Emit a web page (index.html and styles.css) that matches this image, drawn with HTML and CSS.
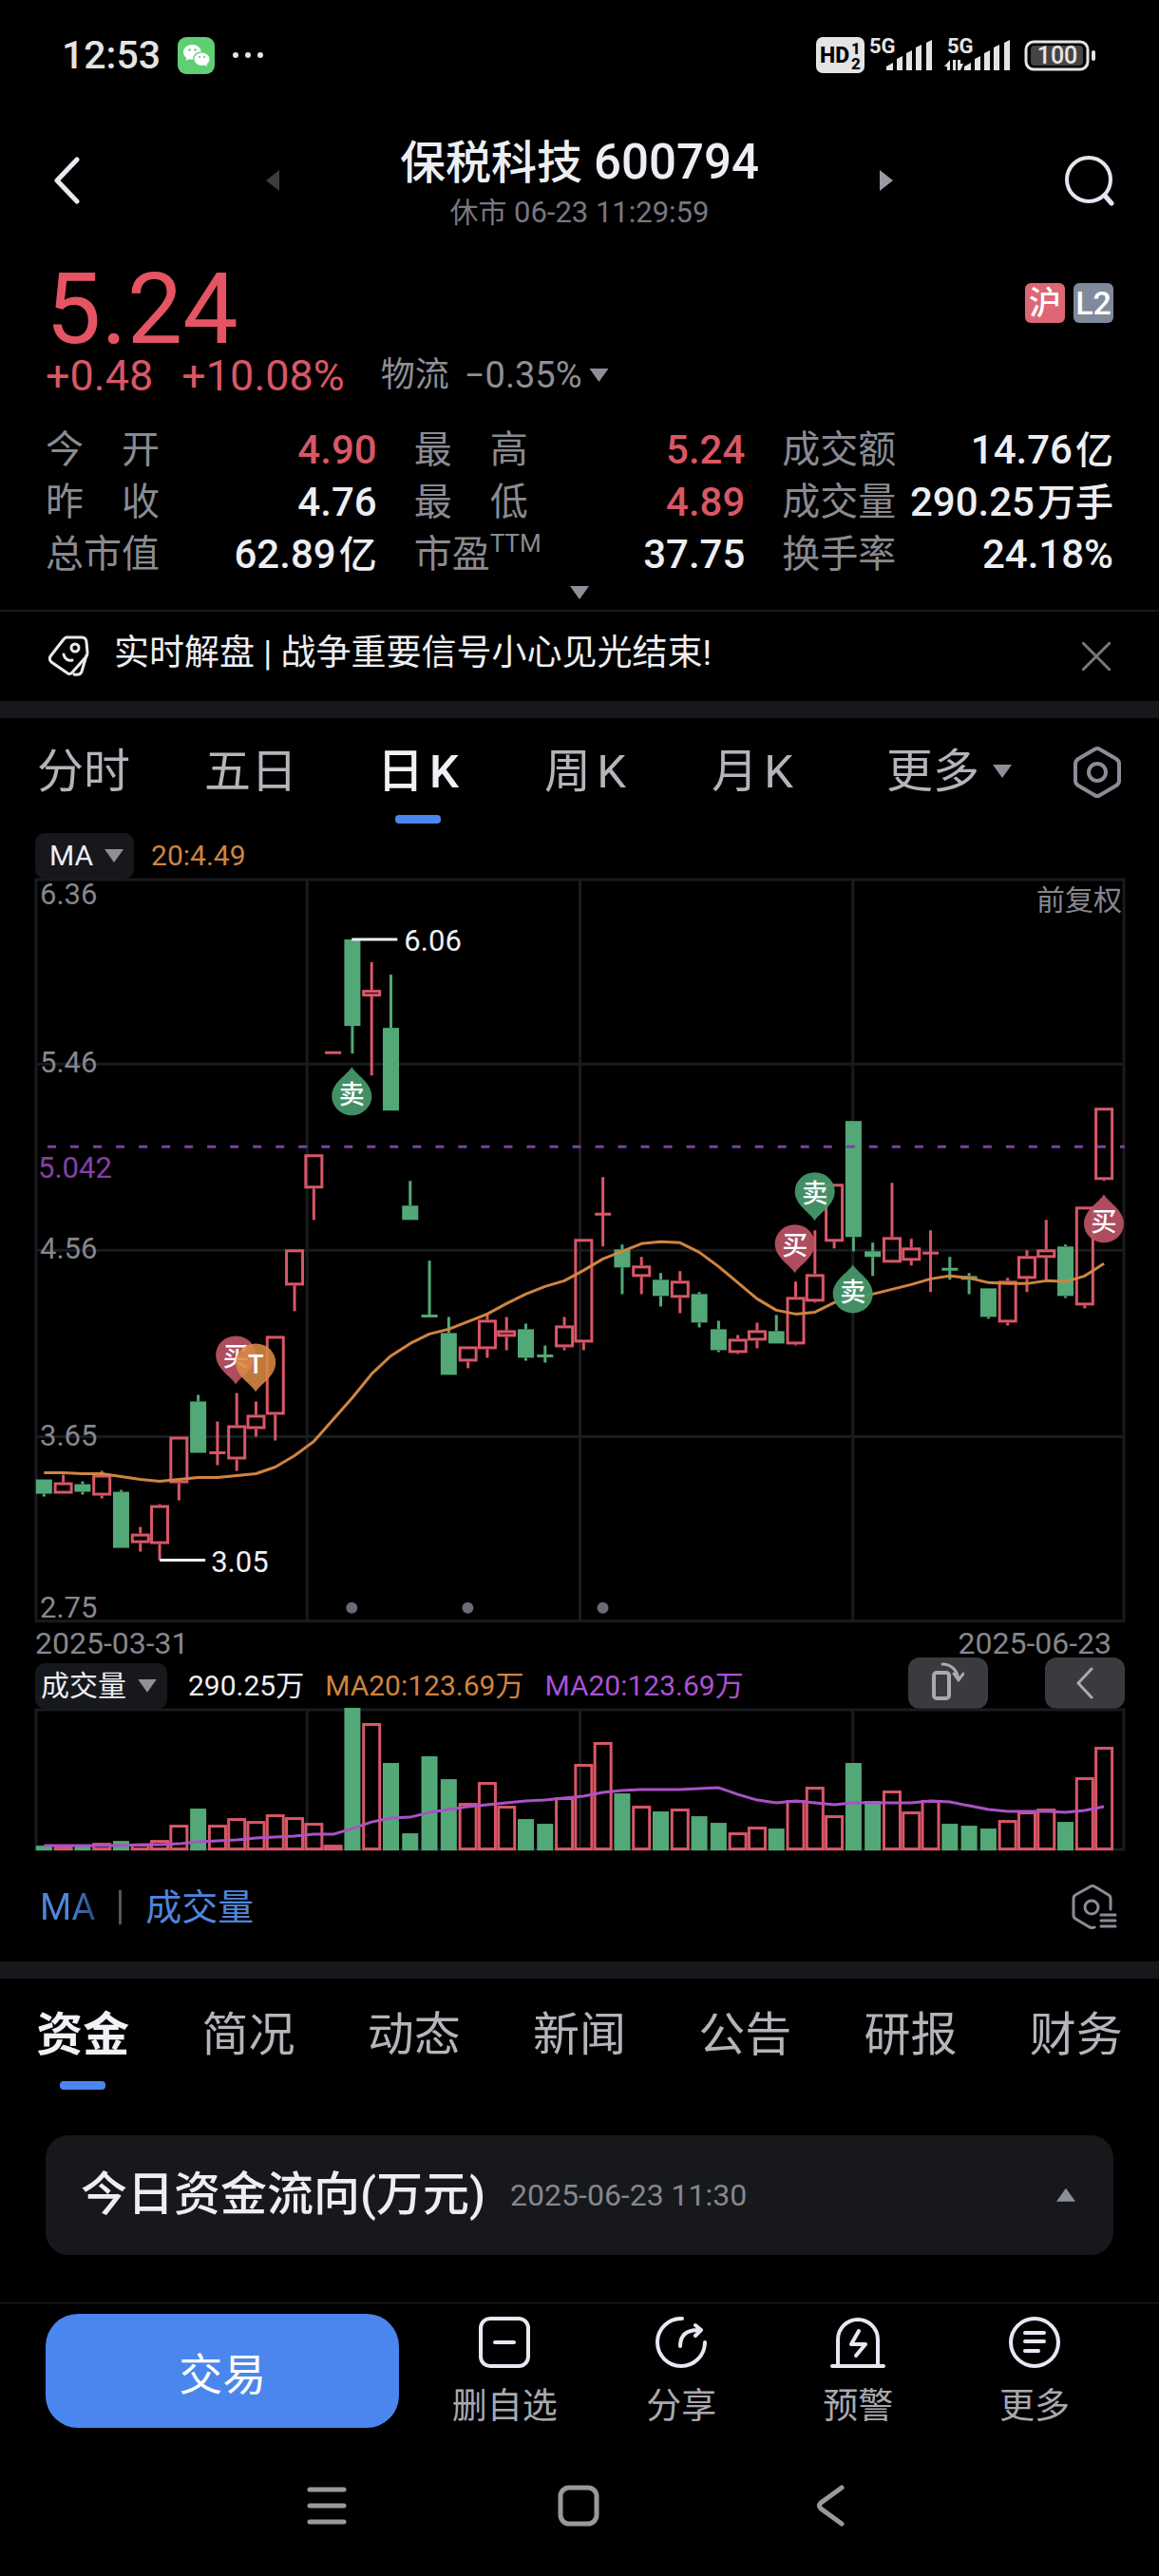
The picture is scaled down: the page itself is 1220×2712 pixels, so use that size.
FILE: index.html
```html
<!DOCTYPE html>
<html lang="zh-CN">
  <head>
    <meta charset="UTF-8" />
    <meta name="viewport" content="width=device-width, initial-scale=1" />
    <title>保税科技 600794</title>
    <link rel="stylesheet" href="styles.css">
  </head>
  <body>
    <div class="status-bar">
      <div class="status-left">
        <span class="clock">12:53</span>
        <svg class="wechat" width="39" height="39" viewBox="0 0 39 39">
          <rect width="39" height="39" rx="9" fill="#5fcf74" />
          <path d="M15.500 8C10.200 8 6 11.600 6 16c0 2.500 1.300 4.600 3.400 6.100l-.9 3 3.400-1.800c1.100.3 2.300.5 3.600.5h.7c-.3-4.600 3.500-8.500 8.700-8.500C24.100 11 20.300 8 15.500 8z" fill="#fff" />
          <path d="M25.500 16.500c-4.400 0-8 3-8 6.700s3.600 6.700 8 6.700c1 0 2-.2 2.900-.5l2.800 1.500-.8-2.500c1.900-1.200 3.100-3.100 3.100-5.200 0-3.700-3.600-6.700-8-6.700z" fill="#fff" />
          <g fill="#5fcf74">
            <circle cx="12.500" cy="13.500" r="1.300" /><circle cx="18.500" cy="13.500" r="1.300" />
            <circle cx="23" cy="21" r="1.100" /><circle cx="28" cy="21" r="1.100" />
          </g>
        </svg>
        <svg width="34" height="8" viewBox="0 0 34 8" fill="#e4e4e4">
          <circle cx="4" cy="4" r="3" /><circle cx="17" cy="4" r="3" /><circle cx="30" cy="4" r="3" />
        </svg>
      </div>
      <div class="status-right">
        <svg width="205" height="50" viewBox="0 -6 205 50" fill="#e4e4e4">
          <rect width="51" height="38" rx="7" />
          <text x="4" y="27" font-size="23" font-weight="800" fill="#000">HD</text>
          <text x="37" y="18" font-size="17" font-weight="800" fill="#000">1</text>
          <text x="37" y="34" font-size="17" font-weight="800" fill="#000">2</text>
          <text x="56" y="17" font-size="22" font-weight="700">5G</text>
          <path d="M74 35v-4l7-4v8zM85 35V23l6-3v15zM95 35V17l6-3v21zM105 35V11l6-3v27zM116 35V6l6-3v32z" />
          <text x="138" y="17" font-size="22" font-weight="700">5G</text>
          <path d="M141 24v11h-3v-4h-3l6-7zM144 24h3v11h-3zM149 35V24h3v4h3l-3 7z" />
          <path d="M156 35v-4l7-4v8zM167 35V23l6-3v15zM177 35V17l6-3v21zM187 35V11l6-3v27zM198 35V6l6-3v32z" />
        </svg>
        <svg width="76" height="33" viewBox="0 0 76 33">
          <rect x="2" y="2" width="65" height="29" rx="8" fill="none" stroke="#e4e4e4" stroke-width="3" />
          <rect x="7" y="6" width="55" height="21" rx="4" fill="#444" />
          <rect x="71" y="11" width="4" height="11" rx="2" fill="#e4e4e4" />
          <text x="35" y="25" font-size="25" font-weight="500" text-anchor="middle" fill="#e4e4e4">100</text>
        </svg>
      </div>
    </div>

    <header class="header">
      <button class="icon-button back" aria-label="返回">
        <svg width="28" height="50" viewBox="0 0 28 50"><path d="M25 3L4 25l21 22" fill="none" stroke="#e9eaf0" stroke-width="5" stroke-linecap="round" stroke-linejoin="round" /></svg>
      </button>
      <div class="stock-switch">
        <button class="caret caret-left" aria-label="上一只"></button>
        <div class="stock-title">
          <h1>保税科技 <span>600794</span></h1>
          <p>休市 <span>06-23 11:29:59</span></p>
        </div>
        <button class="caret caret-right" aria-label="下一只"></button>
      </div>
      <button class="icon-button search" aria-label="搜索">
        <svg width="54" height="54" viewBox="0 0 54 54" fill="none" stroke="#e3e6f0" stroke-linecap="round"><circle cx="26" cy="26" r="23" stroke-width="4" /><path d="M43 43l7 8" stroke-width="5" /></svg>
      </button>
    </header>

    <section class="quote">
      <div class="price-row">
        <strong class="price">5.24</strong>
        <div class="badges"><span class="badge badge-sh">沪</span><span class="badge badge-l2">L2</span></div>
      </div>
      <div class="change-row">
        <span class="up">+0.48</span>
        <span class="up">+10.08%</span>
        <button class="sector">物流 <span>−0.35%</span><i class="caret caret-down"></i></button>
      </div>
      <dl class="stats">
        <div><dt class="spread">今<i></i>开</dt><dd class="up">4.90</dd></div>
        <div><dt class="spread">最<i></i>高</dt><dd class="up">5.24</dd></div>
        <div><dt>成交额</dt><dd>14.76<small>亿</small></dd></div>
        <div><dt class="spread">昨<i></i>收</dt><dd>4.76</dd></div>
        <div><dt class="spread">最<i></i>低</dt><dd class="up">4.89</dd></div>
        <div><dt>成交量</dt><dd>290.25<small>万手</small></dd></div>
        <div><dt>总市值</dt><dd>62.89<small>亿</small></dd></div>
        <div><dt>市盈<sup>TTM</sup></dt><dd>37.75</dd></div>
        <div><dt>换手率</dt><dd>24.18%</dd></div>
      </dl>
      <button class="caret caret-down expand" aria-label="展开"></button>
    </section>

    <section class="notice">
      <svg width="44" height="46" viewBox="0 0 44 46" fill="none" stroke="#e9eaf0" stroke-width="3" stroke-linecap="round" stroke-linejoin="round">
        <path d="M20 3h16c3 0 5 2 5 5l1 11c0 2 0 3-1 4L26 40c-2 2-4 2-6 0L4 29c-2-2-2-4-1-6L17 5c1-1 2-2 3-2z" />
        <path d="M41 22l-5 17c-1 3-3 4-8 3" />
        <circle cx="29" cy="14" r="4" />
        <path d="M17 21c1 5 5 7 9 6" />
      </svg>
      <a href="#">实时解盘 | 战争重要信号小心见光结束!</a>
      <button class="icon-button" aria-label="关闭">
        <svg width="30" height="30" viewBox="0 0 30 30"><path d="M1 1l28 28M29 1L1 29" stroke="#77787f" stroke-width="3" stroke-linecap="round" /></svg>
      </button>
    </section>

    <nav class="period-tabs">
      <button>分时</button>
      <button>五日</button>
      <button class="active">日<span>K</span></button>
      <button>周<span>K</span></button>
      <button>月<span>K</span></button>
      <button class="more">更多<i class="caret caret-down"></i></button>
      <button class="settings" aria-label="设置">
        <svg width="50" height="54" viewBox="0 0 50 54" fill="none" stroke="#8b8d96" stroke-width="4" stroke-linejoin="round"><path d="M22 3q3-2 6 0l17 10q3 2 3 5v18q0 3-3 5L28 51q-3 2-6 0L5 41q-3-2-3-5V18q0-3 3-5z" /><circle cx="25" cy="27" r="9" /></svg>
      </button>
    </nav>

    <section class="chart-section">
      <div class="indicator-row">
        <button class="chip chip-ma">MA<i class="caret caret-down"></i></button>
        <span class="orange">20:4.49</span>
      </div>

      <svg class="chart" id="candle-chart" viewBox="0 0 1146 782">
        <g class="grid">
          <rect x="1" y="1" width="1144" height="780" />
          <path d="M1 195h1144M1 391h1144M1 587h1144M286 1v780M573 1v780M860 1v780" />
        </g>
        <g class="axis">
          <text x="5" y="27">6.36</text>
          <text x="5" y="204">5.46</text>
          <text x="5" y="400">4.56</text>
          <text x="5" y="596">3.65</text>
          <text x="5" y="777">2.75</text>
          <text x="1143" y="33" text-anchor="end" class="adjust">前复权</text>
          <text x="3" y="315" class="cost">5.042</text>
        </g>
        <g id="candles"></g>
        <path class="cost-line" d="M13 282h1133" />
        <g class="extreme">
          <path d="M333 64h48M131 717h48" />
          <text x="388" y="76">6.06</text>
          <text x="185" y="729">3.05</text>
        </g>
        <g class="events"><circle cx="333" cy="767" r="6" /><circle cx="455" cy="767" r="6" /><circle cx="597" cy="767" r="6" /></g>
        <g id="markers"></g>
      </svg>

      <div class="date-row"><span>2025-03-31</span><span>2025-06-23</span></div>

      <div class="volume-row">
        <button class="chip">成交量<i class="caret caret-down"></i></button>
        <span class="white">290.25万</span>
        <span class="orange">MA20:123.69万</span>
        <span class="purple">MA20:123.69万</span>
        <div class="chart-tools">
          <button aria-label="横屏">
            <svg width="34" height="46" viewBox="0 0 34 46" fill="none" stroke="#a9aaae" stroke-width="4" stroke-linecap="round" stroke-linejoin="round"><rect x="2" y="12" width="16" height="27" rx="3" /><path d="M11 3c9 0 16 6 17 17M23 13l5 7 5-7" stroke-width="3" /></svg>
          </button>
          <button aria-label="收起">
            <svg width="20" height="36" viewBox="0 0 20 36"><path d="M17 3L3 18l14 15" fill="none" stroke="#a9aaae" stroke-width="3" stroke-linecap="round" stroke-linejoin="round" /></svg>
          </button>
        </div>
      </div>

      <svg class="chart" id="volume-chart" viewBox="0 0 1146 149">
        <g class="grid">
          <rect x="1" y="1" width="1144" height="147" />
          <path d="M286 1v147M573 1v147M860 1v147" />
        </g>
        <g id="volumes"></g>
      </svg>

      <div class="indicator-links">
        <button class="fade">MA</button>
        <i class="divider"></i>
        <button>成交量</button>
        <button class="manage" aria-label="指标管理">
          <svg width="48" height="48" viewBox="0 0 48 48" fill="none" stroke="#8b8d96" stroke-width="3" stroke-linecap="round" stroke-linejoin="round"><path d="M41 26V15q0-3-2-4L24 2q-2-1-4 0L4 11q-2 1-2 4v17q0 3 2 4l15 9q3 1 5 0" /><circle cx="21" cy="24" r="7" /><path d="M31 32h15M31 38h15M31 44h15" /></svg>
        </button>
      </div>
    </section>

    <nav class="info-tabs">
      <button class="active">资金</button>
      <button>简况</button>
      <button>动态</button>
      <button>新闻</button>
      <button>公告</button>
      <button>研报</button>
      <button>财务</button>
    </nav>

    <section class="flow-card">
      <h2>今日资金流向(万元)</h2>
      <time>2025-06-23 11:30</time>
      <button class="caret caret-up" aria-label="收起"></button>
    </section>

    <footer class="action-bar">
      <button class="trade">交易</button>
      <button class="action">
        <svg width="58" height="54" viewBox="0 0 58 54"><rect x="4" y="2" width="50" height="50" rx="10" /><path d="M19 27h20" /></svg>
        删自选
      </button>
      <button class="action">
        <svg width="58" height="54" viewBox="0 0 58 54"><path d="M30 2A25 25 0 1 0 54 27M28 31c0-11 6-17 19-17M44 9l6 5-6 6" /></svg>
        分享
      </button>
      <button class="action">
        <svg width="58" height="54" viewBox="0 0 58 54"><path d="M2 52h54M8 52V24a21 21 0 0 1 42 0v28M30 15l-8 14h15l-10 12" /></svg>
        预警
      </button>
      <button class="action">
        <svg width="58" height="54" viewBox="0 0 58 54"><circle cx="29" cy="27" r="25" /><path d="M19 17h20M19 26h20M19 36h14" /></svg>
        更多
      </button>
    </footer>

    <div class="system-nav">
      <button aria-label="任务"><svg width="42" height="42" viewBox="0 0 42 42"><path d="M3 4h36M3 21h36M3 38h36" /></svg></button>
      <button aria-label="主页"><svg width="44" height="44" viewBox="0 0 44 44"><rect x="3" y="3" width="38" height="38" rx="9" /></svg></button>
      <button aria-label="后退"><svg width="44" height="44" viewBox="0 0 44 44"><path d="M33 3L11 19q-3 3 0 6l22 16" /></svg></button>
    </div>

    <script src="chart.js"></script>
  </body>
</html>
```
FILE: styles.css
```css
* {
  box-sizing: border-box;
}

body {
  margin: 0;
  background: #000;
  color: #edeef3;
  font-family: Roboto, "Noto Sans CJK SC", sans-serif;
}

button {
  background: none;
  border: none;
  padding: 0;
  color: inherit;
  font: inherit;
  cursor: pointer;
}

svg {
  display: block;
}

h1,
h2,
p,
dl,
dd {
  margin: 0;
}

.up {
  color: #d85766;
}

.orange {
  color: #d08440;
}

.purple {
  color: #ab52d2;
}

.white {
  color: #edeef3;
}

/* 三角箭头 */
.caret {
  display: inline-block;
  flex: none;
  width: 20px;
  height: 14px;
  background: #8e8f98;
}

.caret-down {
  clip-path: polygon(0 0, 100% 0, 50% 100%);
}

.caret-up {
  clip-path: polygon(50% 0, 100% 100%, 0 100%);
}

.caret-left,
.caret-right {
  width: 14px;
  height: 22px;
}

.caret-left {
  background: #3b3b40;
  clip-path: polygon(100% 0, 100% 100%, 0 50%);
}

.caret-right {
  background: #989aa3;
  clip-path: polygon(0 0, 100% 50%, 0 100%);
}

/* 状态栏 */
.status-bar {
  display: flex;
  justify-content: space-between;
  height: 116px;
  padding: 0 66px 0 65px;
  color: #e4e4e4;
}

.status-left,
.status-right {
  display: flex;
  align-items: center;
  height: 116px;
}

.status-right {
  gap: 14px;
}

.clock {
  font-size: 41px;
  font-weight: 500;
}

.wechat {
  margin: 0 18px;
}

/* 顶部标题 */
.header {
  display: grid;
  grid-template-columns: 1fr auto 1fr;
  align-items: center;
  height: 148px;
  padding: 0 46px;
}

.search {
  justify-self: end;
}

.back {
  justify-self: start;
  padding-left: 10px;
}

.stock-switch {
  display: flex;
  align-items: center;
  justify-content: space-between;
  width: 660px;
}

.stock-title {
  padding-top: 6px;
  text-align: center;
}

h1 {
  font-size: 48px;
  font-weight: 500;
  line-height: 60px;
}

h1 span {
  font-size: 51px;
}

.stock-title p {
  color: #777881;
  font-size: 30px;
  line-height: 44px;
}

.stock-title p span {
  font-size: 31px;
}

/* 行情 */
.quote {
  padding: 16px 48px 0;
  border-bottom: 2px solid #1a1a1d;
}

.price-row {
  display: flex;
  justify-content: space-between;
}

.price {
  color: #e55463;
  font-size: 104px;
  font-weight: 400;
  line-height: 92px;
}

.badges {
  display: flex;
  gap: 9px;
  padding-top: 18px;
}

.badge {
  width: 42px;
  height: 42px;
  border-radius: 6px;
  color: #fff;
  font-size: 34px;
  font-weight: 500;
  line-height: 42px;
  text-align: center;
}

.badge-sh {
  background: #de6675;
}

.badge-l2 {
  background: #7f8a9c;
}

.change-row {
  display: flex;
  align-items: center;
  gap: 30px;
  height: 46px;
  font-size: 45px;
}

.sector {
  display: flex;
  align-items: center;
  gap: 16px;
  margin-left: 8px;
  color: #8e8f98;
  font-size: 36px;
  line-height: 44px;
}

.sector span {
  font-size: 38px;
}

.sector .caret {
  margin-left: -8px;
}

.stats {
  display: grid;
  grid-template-columns: repeat(3, 1fr);
  column-gap: 39px;
  padding-top: 28px;
}

.stats div {
  display: flex;
  justify-content: space-between;
  height: 55px;
  line-height: 55px;
}

.stats dt {
  color: #8a8b92;
  font-size: 40px;
}

.stats .spread i {
  display: inline-block;
  width: 40px;
}

.stats sup {
  font-size: 26px;
  line-height: 1;
  vertical-align: 16px;
}

.stats dd {
  font-size: 42px;
  font-weight: 500;
}

.stats small {
  margin-left: 3px;
  font-size: 40px;
}

.expand {
  display: block;
  margin: 6px auto 11px;
}

/* 解盘提示 */
.notice {
  display: flex;
  align-items: center;
  gap: 26px;
  height: 94px;
  padding: 0 51px 0 50px;
}

.notice a {
  flex: 1;
  padding-bottom: 6px;
  color: inherit;
  font-size: 37px;
  line-height: 48px;
  text-decoration: none;
}

/* 周期切换 */
.period-tabs {
  display: grid;
  grid-template-columns: repeat(5, 1fr) 238px 74px;
  height: 138px;
  padding-right: 28px;
  border-top: 18px solid #17181c;
}

.period-tabs button,
.info-tabs button {
  position: relative;
  color: #b4b5bb;
  font-size: 49px;
  line-height: 72px;
}

.period-tabs button {
  padding-bottom: 6px;
}

.info-tabs button {
  padding-top: 4px;
}

.period-tabs span {
  margin-left: 6px;
}

.period-tabs .active,
.info-tabs .active {
  color: #f0f1f5;
  font-weight: 500;
}

.period-tabs .active::after,
.info-tabs .active::after {
  content: "";
  position: absolute;
  left: calc(50% - 24px);
  bottom: 0;
  width: 48px;
  height: 9px;
  border-radius: 4px;
  background: #4a86ee;
}

.period-tabs .active::after {
  bottom: 9px;
}

.period-tabs .more .caret {
  margin: 0 0 10px 14px;
}

.period-tabs .settings {
  display: flex;
  align-items: center;
  justify-content: center;
}

/* 图表 */
.chart-section {
  padding: 0 36px 0 37px;
}

.indicator-row,
.volume-row {
  display: flex;
  align-items: flex-end;
  font-size: 30px;
  line-height: 48px;
}

.indicator-row {
  gap: 18px;
  height: 49px;
}

.chip {
  display: flex;
  align-items: center;
  gap: 12px;
  height: 48px;
  padding: 0 11px 0 6px;
  border-radius: 10px;
  background: #17181c;
}

.chip-ma {
  padding-left: 15px;
}

.chart {
  width: 100%;
  height: auto;
  overflow: visible;
}

.chart text {
  font-size: 31px;
}

.chart .adjust {
  font-size: 30px;
}

.grid {
  fill: none;
  stroke: #1a1b1f;
  stroke-width: 3;
}

.axis {
  fill: #86878e;
}

.axis .cost {
  fill: #8440a6;
}

.cost-line {
  fill: none;
  stroke: #7b3fa4;
  stroke-width: 3;
  stroke-dasharray: 9 15;
}

.extreme {
  fill: #f0f1f5;
  stroke: none;
}

.extreme path {
  stroke: #f0f1f5;
  stroke-width: 3;
}

.events {
  fill: #696b75;
}

.rise {
  fill: none;
  stroke: #d85767;
  stroke-width: 3;
}

.fall {
  fill: #52a977;
  stroke: #52a977;
  stroke-width: 3;
}

.ma-line,
.volume-line {
  fill: none;
  stroke: #d08440;
  stroke-width: 3;
  stroke-linejoin: round;
}

.volume-line {
  stroke: #ab52c4;
}

.marker {
  fill: #47986b;
  fill-opacity: 0.94;
}

.marker-buy {
  fill: #b95264;
}

.marker-t {
  fill: #d98a45;
  fill-opacity: 0.88;
}

.chart .marker-text {
  fill: #fff;
  font-size: 27px;
  font-weight: 500;
  text-anchor: middle;
}

.date-row {
  display: flex;
  justify-content: space-between;
  height: 36px;
  padding-right: 14px;
  color: #86878e;
  font-size: 32px;
  line-height: 44px;
}

.volume-row {
  gap: 22px;
  height: 55px;
}

.chart-tools {
  display: flex;
  gap: 60px;
  margin-left: auto;
}

.chart-tools button {
  display: flex;
  align-items: center;
  justify-content: center;
  width: 84px;
  height: 54px;
  border-radius: 12px;
  background: #3a3b3f;
}

.indicator-links {
  display: flex;
  align-items: center;
  gap: 25px;
  height: 117px;
  padding: 4px 8px 0 5px;
  color: #4f86dc;
  font-size: 38px;
  line-height: 44px;
}

.fade {
  background: linear-gradient(90deg, #4f86dc 50%, #2c4a7a);
  background-clip: text;
  -webkit-background-clip: text;
  color: transparent;
}

.divider {
  width: 3px;
  height: 36px;
  background: #55565c;
}

.manage {
  margin-left: auto;
}

/* 资讯切换 */
.info-tabs {
  display: grid;
  grid-template-columns: repeat(7, 1fr);
  height: 135px;
  border-top: 18px solid #17181c;
}

.info-tabs .active {
  font-weight: 700;
}

.flow-card {
  display: flex;
  align-items: center;
  height: 126px;
  margin: 48px 48px 50px;
  padding: 0 40px 0 37px;
  border-radius: 24px;
  background: #17181c;
}

h2 {
  font-size: 49px;
  font-weight: 500;
  line-height: 64px;
}

.flow-card time {
  margin-left: 26px;
  color: #86878e;
  font-size: 32px;
}

.flow-card .caret {
  margin-left: auto;
}

/* 底部操作 */
.action-bar {
  display: grid;
  grid-template-columns: 21fr repeat(4, 10fr);
  padding: 11px 38px 0 48px;
  border-top: 1px solid #202125;
}

.trade {
  height: 120px;
  margin-right: 18px;
  border-radius: 34px;
  background: #4a86ee;
  color: #fff;
  font-size: 46px;
}

.action {
  display: flex;
  flex-direction: column;
  align-items: center;
  gap: 16px;
  height: 120px;
  padding-top: 3px;
  color: #a8a9af;
  font-size: 37px;
  line-height: 50px;
}

.action svg {
  flex: none;
  fill: none;
  stroke: #e6e9f2;
  stroke-width: 4;
  stroke-linecap: round;
  stroke-linejoin: round;
}

/* 系统导航 */
.system-nav {
  display: flex;
  justify-content: center;
  gap: 222px;
  padding: 60px 0 53px;
}

.system-nav svg {
  fill: none;
  stroke: #999;
  stroke-width: 5;
  stroke-linecap: round;
}
```
FILE: chart.js
```js
const SVG_NS = "http://www.w3.org/2000/svg";
const STEP = 20.27;
const FIRST_X = 9.3;

// [涨跌, 实体上沿, 实体下沿, 最高, 最低, 成交量高度]
const bars = [
  ["g", 632, 647, 632, 650, 5], ["r", 635, 647, 627, 647, 6], ["g", 637, 645, 634, 648, 5],
  ["r", 627, 649, 623, 652, 8], ["g", 645, 704, 643, 704, 10], ["r", 689, 699, 682, 708, 7],
  ["r", 659, 700, 658, 717, 11], ["r", 587, 636, 587, 654, 27], ["g", 550, 604, 543, 604, 44],
  ["r", 603, 605, 571, 617, 27], ["r", 575, 611, 541, 623, 34], ["r", 564, 579, 550, 587, 31],
  ["r", 481, 564, 481, 591, 38], ["r", 390, 428, 390, 455, 35], ["r", 290, 326, 290, 359, 29],
  ["r", 182, 184, 182, 184, 6], ["g", 64, 155, 64, 184, 150], ["r", 117, 124, 88, 207, 134],
  ["g", 157, 244, 101, 244, 92], ["g", 344, 359, 318, 359, 18], ["g", 459, 461, 402, 461, 99],
  ["g", 478, 522, 461, 522, 75], ["r", 492, 508, 492, 515, 50], ["r", 464, 495, 458, 504, 72],
  ["r", 475, 482, 461, 496, 47], ["g", 474, 504, 468, 507, 33], ["g", 501, 503, 491, 509, 28],
  ["r", 470, 493, 461, 496, 56], ["r", 379, 488, 379, 496, 91], ["r", 352, 354, 314, 387, 114],
  ["g", 390, 409, 385, 437, 60], ["r", 407, 419, 398, 437, 47], ["g", 422, 439, 415, 450, 41],
  ["r", 423, 441, 413, 457, 44], ["g", 437, 467, 435, 472, 36], ["g", 474, 496, 465, 498, 29],
  ["r", 484, 499, 480, 500, 19], ["r", 475, 486, 467, 494, 25], ["g", 476, 489, 459, 489, 23],
  ["r", 440, 490, 424, 491, 53], ["r", 416, 445, 370, 446, 67], ["r", 321, 382, 321, 389, 37],
  ["g", 255, 377, 255, 392, 92], ["g", 392, 398, 383, 418, 52], ["r", 377, 404, 320, 404, 63],
  ["r", 388, 402, 379, 407, 41], ["r", 393, 395, 370, 435, 53], ["g", 410, 412, 398, 422, 28],
  ["g", 418, 422, 415, 437, 26], ["g", 431, 461, 431, 463, 23], ["r", 423, 467, 420, 470, 32],
  ["r", 397, 421, 391, 435, 41], ["r", 390, 399, 359, 422, 44], ["g", 387, 439, 385, 441, 30],
  ["r", 345, 449, 345, 452, 77], ["r", 241, 317, 241, 318, 109],
];

const ma20 = [
  625, 625, 626, 626, 629, 632, 634, 632, 630, 630, 628, 626, 619, 607, 592, 569, 546, 521, 502,
  489, 479, 474, 466, 458, 447, 437, 429, 423, 412, 400, 392, 384, 382, 383, 393, 408, 425, 442,
  454, 458, 456, 446, 441, 437, 432, 427, 421, 418, 420, 425, 426, 426, 423, 424, 418, 405,
];

const volumeMa = [
  144, 144, 144, 144, 144, 143, 143, 142, 140, 139, 138, 136, 135, 134, 132, 132, 126, 119, 115,
  114, 109, 106, 103, 101, 99, 97, 96, 94, 92, 88, 86, 85, 85, 85, 84, 83, 90, 96, 99, 97, 99,
  101, 99, 99, 99, 99, 97, 98, 102, 106, 108, 108, 108, 109, 107, 103,
];

// 买卖点，y 为尖端位置
const markers = [
  { x: 333, y: 198, text: "卖", up: true },
  { x: 211, y: 532, text: "买", type: "buy" },
  { x: 232, y: 540, text: "T", type: "t" },
  { x: 820, y: 360, text: "卖" },
  { x: 799, y: 415, text: "买", type: "buy" },
  { x: 860, y: 406, text: "卖", up: true },
  { x: 1124, y: 332, text: "买", type: "buy", up: true },
];

function add(parent, tag, attrs) {
  const el = document.createElementNS(SVG_NS, tag);
  Object.entries(attrs).forEach(([key, val]) => el.setAttribute(key, val));
  parent.appendChild(el);
  return el;
}

function xAt(i) {
  return FIRST_X + i * STEP;
}

function drawBar(parent, x, top, bottom, cls) {
  // 空心阳线比阴线略宽
  const width = cls === "rise" ? 17 : 14;
  add(parent, "rect", {
    x: x - width / 2,
    y: top + 1.5,
    width,
    height: Math.max(bottom - top - 3, 0),
    class: cls,
  });
}

function drawLine(parent, values, cls) {
  const points = values.map((y, i) => `${xAt(i)},${y}`).join(" ");
  add(parent, "polyline", { points, class: cls });
}

const candles = document.getElementById("candles");
const volumes = document.getElementById("volumes");

bars.forEach(([dir, top, bottom, high, low, volume], i) => {
  const x = xAt(i);
  const cls = dir === "r" ? "rise" : "fall";
  if (bottom - top <= 2) {
    add(candles, "path", { d: `M${x - 8.5} ${top + 1}h17M${x} ${high}V${low}`, class: cls });
  } else {
    add(candles, "path", { d: `M${x} ${high}V${top}M${x} ${bottom}V${low}`, class: cls });
    drawBar(candles, x, top, bottom, cls);
  }
  drawBar(volumes, x, 149 - volume, 149, cls);
});

drawLine(candles, ma20, "ma-line");
drawLine(volumes, volumeMa, "volume-line");

const layer = document.getElementById("markers");
markers.forEach(({ x, y, text, type, up }) => {
  const dir = up ? 1 : -1;
  add(layer, "path", {
    d: "M0 0C4 8 21 16 21 31A21 20 0 0 1 -21 31C-21 16 -4 8 0 0Z",
    transform: `translate(${x} ${y}) scale(1 ${dir})`,
    class: type ? `marker marker-${type}` : "marker",
  });
  add(layer, "text", { x, y: y + dir * 29 + 10, class: "marker-text" }).textContent = text;
});
```
